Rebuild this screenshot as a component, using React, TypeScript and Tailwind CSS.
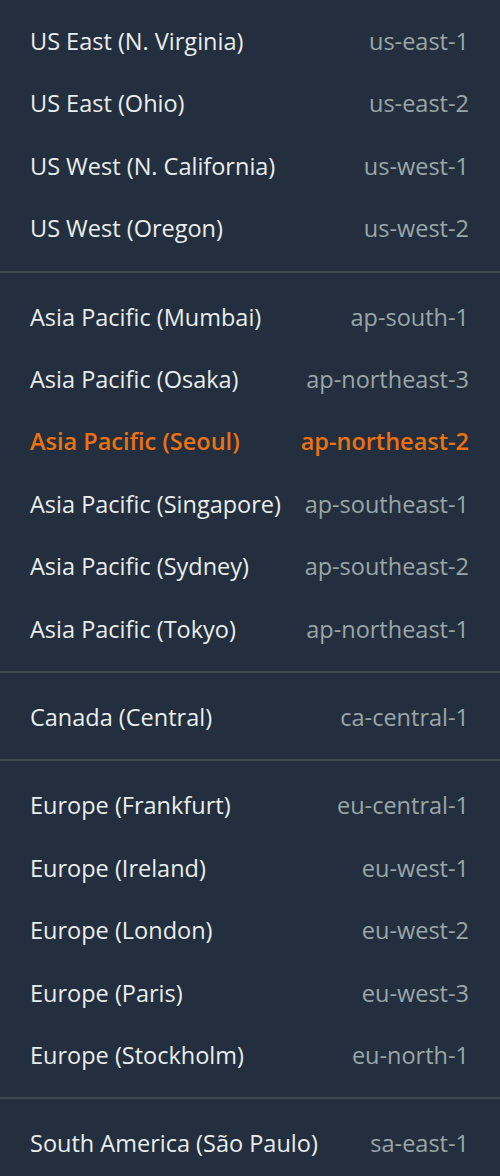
import React from "react";

type Region = { name: string; code: string; selected?: boolean };

const groups: Region[][] = [
  [
    { name: "US East (N. Virginia)", code: "us-east-1" },
    { name: "US East (Ohio)", code: "us-east-2" },
    { name: "US West (N. California)", code: "us-west-1" },
    { name: "US West (Oregon)", code: "us-west-2" },
  ],
  [
    { name: "Asia Pacific (Mumbai)", code: "ap-south-1" },
    { name: "Asia Pacific (Osaka)", code: "ap-northeast-3" },
    { name: "Asia Pacific (Seoul)", code: "ap-northeast-2", selected: true },
    { name: "Asia Pacific (Singapore)", code: "ap-southeast-1" },
    { name: "Asia Pacific (Sydney)", code: "ap-southeast-2" },
    { name: "Asia Pacific (Tokyo)", code: "ap-northeast-1" },
  ],
  [{ name: "Canada (Central)", code: "ca-central-1" }],
  [
    { name: "Europe (Frankfurt)", code: "eu-central-1" },
    { name: "Europe (Ireland)", code: "eu-west-1" },
    { name: "Europe (London)", code: "eu-west-2" },
    { name: "Europe (Paris)", code: "eu-west-3" },
    { name: "Europe (Stockholm)", code: "eu-north-1" },
  ],
  [{ name: "South America (São Paulo)", code: "sa-east-1" }],
];

export default function App() {
  return (
    <div
      className="w-[500px] h-[1176px] overflow-hidden bg-[#232f3e] pt-[9px]"
      style={{ fontFamily: '"Open Sans", "Noto Sans", sans-serif' }}
    >
      {groups.map((g, gi) => (
        <div
          key={gi}
          className={
            gi === 0
              ? "pb-[12px]"
              : "border-t-2 border-[#414750] py-[12px]"
          }
        >
          {g.map((r) => (
            <div
              key={r.code}
              className="h-[62.4px] pt-[3px] flex items-center justify-between pl-[30px] pr-[31px] text-[23.5px]"
            >
              <span
                className={
                  r.selected
                    ? "text-[#ec7211] font-semibold"
                    : "text-[#eaeded]"
                }
              >
                {r.name}
              </span>
              <span
                className={
                  r.selected
                    ? "text-[#ec7211] font-semibold"
                    : "text-[#9aa6a8]"
                }
              >
                {r.code}
              </span>
            </div>
          ))}
        </div>
      ))}
    </div>
  );
}
